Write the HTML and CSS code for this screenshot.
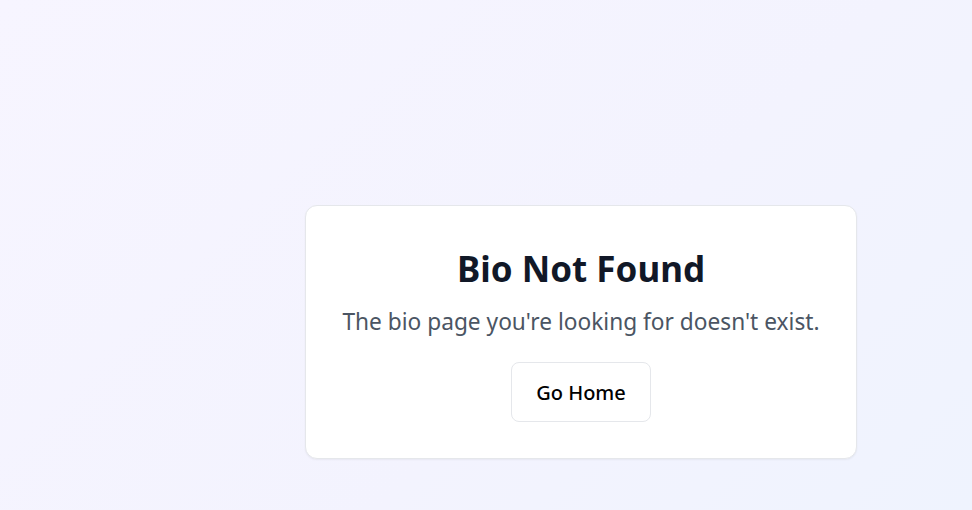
FILE: index.html
```html
<!DOCTYPE html>
<html lang="en">
<head>
<meta charset="utf-8">
<title>Bio Not Found</title>
<link rel="stylesheet" href="styles.css">
</head>
<body>
<main class="page">
  <div class="card">
    <h1 class="title">Bio Not Found</h1>
    <p class="desc">The bio page you're looking for doesn't exist.</p>
    <a class="btn" href="#">Go Home</a>
  </div>
</main>
</body>
</html>
```
FILE: styles.css
```css
* { box-sizing: border-box; }
html, body { margin: 0; padding: 0; }
body {
  font-family: "Noto Sans", "Open Sans", sans-serif;
  background: linear-gradient(135deg, #f7f5ff 0%, #f3f3fe 60%, #eff3fe 100%);
  min-height: 510px;
}
.page {
  height: 510px;
  display: flex;
  align-items: flex-start;
  justify-content: flex-start;
  padding: 205px 0 0 305px;
}
.card {
  width: 552px;
  height: 254px;
  background: #fff;
  border: 1px solid #e5e7eb;
  border-radius: 12px;
  box-shadow: 0 1px 2px rgba(0,0,0,0.05);
  display: flex;
  flex-direction: column;
  align-items: center;
  padding-top: 40px;
}
.title {
  margin: 0;
  font-size: 35px;
  font-weight: 700;
  color: #111827;
  line-height: 46px;
}
.desc {
  margin: 14px 0 0;
  font-size: 22.7px;
  color: #4b5563;
  line-height: 32px;
}
.btn {
  margin-top: 24px;
  width: 140px;
  height: 60px;
  display: flex;
  align-items: center;
  justify-content: center;
  border: 1px solid #e5e7eb;
  border-radius: 8px;
  background: #fff;
  color: #000;
  text-decoration: none;
  font-size: 20px;
  font-weight: 500;
}
```
